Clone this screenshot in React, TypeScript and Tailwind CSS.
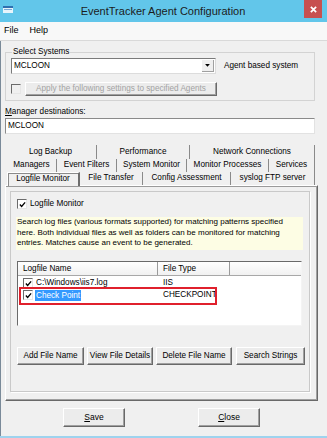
import React from "react";

const Tick = () => (
  <svg viewBox="0 0 8 8" className="w-[7px] h-[7px]">
    <path d="M1 4 L3 6.2 L7 1.5" stroke="#000" strokeWidth="1.5" fill="none" />
  </svg>
);

const CheckBox = ({ checked = false, disabled = false }: { checked?: boolean; disabled?: boolean }) => (
  <span
    className={`w-[10px] h-[10px] shrink-0 flex items-center justify-center border border-t-[#6b6b6b] border-l-[#6b6b6b] border-r-[#e6e6e6] border-b-[#e6e6e6] ${
      disabled ? "bg-[#f0f0f0]" : "bg-white"
    }`}
  >
    {checked && <Tick />}
  </span>
);

const Btn = ({ children, className = "" }: { children: React.ReactNode; className?: string }) => (
  <div
    className={`flex items-center justify-center bg-[#ececec] border border-t-white border-l-white border-r-[#696969] border-b-[#696969] shadow-[inset_-1px_-1px_0_#a0a0a0] whitespace-nowrap ${className}`}
  >
    {children}
  </div>
);

const Tab = ({ label, w }: { label: string; w: string }) => (
  <div className={`${w} h-full flex items-center justify-center border-r border-[#8a8a8a] whitespace-nowrap`}>
    {label}
  </div>
);

export default function App() {
  return (
    <div className="w-[327px] h-[438px] bg-[#f0f0f0] flex flex-col overflow-hidden font-['Liberation_Sans',Arial,sans-serif] text-[8.2px] text-black border-b-2 border-[#9ed3ee] shadow-[inset_1px_0_0_#7a8a99]">
      {/* title bar */}
      <div className="h-[22px] shrink-0 bg-[#62c6ea] flex items-start">
        <div className="w-[14px] pl-[3px] pt-[6px]">
          <svg viewBox="0 0 10 7" className="w-[10px] h-[7px]">
            <rect x="0" y="0" width="10" height="7" fill="#e8f4fb" />
            <rect x="0" y="0" width="10" height="2" fill="#2f6fb0" />
            <rect x="1" y="3" width="8" height="1" fill="#7aa9d6" />
          </svg>
        </div>
        <div className="flex-1 h-full flex items-center justify-center text-[11px] text-[#1c1c1c] pl-[8px]">
          EventTracker Agent Configuration
        </div>
        <div className="w-[18px] h-[18px] mr-[5px] bg-[#c75050] flex items-center justify-center">
          <svg viewBox="0 0 8 8" className="w-[7px] h-[7px]">
            <path d="M1 1 L7 7 M7 1 L1 7" stroke="#fff" strokeWidth="2" />
          </svg>
        </div>
      </div>

      {/* menu */}
      <div className="h-[19px] shrink-0 bg-[#f8f8f8] border-b border-[#d9d9d9] flex items-center gap-[11px] pl-[4px] text-[9px]">
        <span>File</span>
        <span>Help</span>
      </div>

      <div className="flex flex-col px-[5px]">
        {/* select systems */}
        <fieldset className="mt-[6px] w-[310px] border border-[#d3d3d3] px-[5px] pb-[4px]">
          <legend className="ml-[1px] px-[1px] leading-[10px]">Select Systems</legend>
          <div className="mt-[1px] flex items-center">
            <div className="w-[205px] h-[16px] bg-white border border-t-[#7a7a7a] border-l-[#7a7a7a] border-r-[#dcdcdc] border-b-[#dcdcdc] flex items-center">
              <span className="flex-1 pl-[2px]">MCLOON</span>
              <div className="w-[12px] h-[12px] mr-[1px] bg-[#efefef] flex items-center justify-center border-r border-b border-[#a0a0a0]">
                <svg viewBox="0 0 6 5" className="w-[5px] h-[4px]">
                  <path d="M0 0 H6 L3 3.5 Z" fill="#000" />
                </svg>
              </div>
            </div>
            <span className="ml-[8px]">Agent based system</span>
          </div>
          <div className="mt-[8px] flex items-center">
            <CheckBox disabled />
            <Btn className="ml-[4px] w-[192px] h-[14px] text-[#a3a3a3]">Apply the following settings to specified Agents</Btn>
          </div>
        </fieldset>

        {/* manager destinations */}
        <div className="mt-[6px] leading-[10px]">
          <span className="underline">M</span>anager destinations:
        </div>
        <div className="mt-[1px] w-[310px] h-[16px] bg-white border border-t-[#8a8a8a] border-l-[#8a8a8a] border-r-[#e2e2e2] border-b-[#e2e2e2] flex items-center pl-[2px]">
          MCLOON
        </div>

        {/* tabs */}
        <div className="mt-[11px] h-[14px] flex">
          <Tab label="Log Backup" w="w-[92px]" />
          <Tab label="Performance" w="w-[93px]" />
          <Tab label="Network Connections" w="w-[125px]" />
        </div>
        <div className="h-[13px] flex pl-[2px]">
          <Tab label="Managers" w="w-[50px]" />
          <Tab label="Event Filters" w="w-[60px]" />
          <Tab label="System Monitor" w="w-[70px]" />
          <Tab label="Monitor Processes" w="w-[82px]" />
          <Tab label="Services" w="w-[46px]" />
        </div>
        <div className="h-[13px] flex items-end pl-[2px]">
          <div className="w-[73px] h-[14px] flex items-center justify-center bg-[#f0f0f0] border-t border-l border-white border-r-2 border-r-[#6d6d6d] shadow-[inset_0_1px_0_#8a8a8a,inset_1px_0_0_#8a8a8a] relative z-10 -mb-[1px]">
            Logfile Monitor
          </div>
          <Tab label="File Transfer" w="w-[63px]" />
          <Tab label="Config Assessment" w="w-[88px]" />
          <Tab label="syslog FTP server" w="w-[84px]" />
        </div>

        {/* tab panel */}
        <div className="w-[313px] h-[216px] border border-t-white border-l-white border-r-[#696969] border-b-[#696969] shadow-[inset_-1px_-1px_0_#a0a0a0,inset_0_1px_0_#9a9a9a] flex flex-col">
          <div className="ml-[4px] mt-[5px] w-[300px] h-[201px] border border-[#c9c9c9] shadow-[1px_1px_0_#fff] flex flex-col">
            <div className="mt-[6px] ml-[6px] flex items-center gap-[3px]">
              <CheckBox checked />
              <span>Logfile Monitor</span>
            </div>
            <div className="mt-[7px] ml-[5px] w-[287px] h-[33px] bg-[#fdfde4] text-[8px] leading-[10.5px] pl-[1px] pt-[0px] whitespace-nowrap">
              <div>Search log files (various formats supported) for matching patterns specified</div>
              <div>here. Both individual files as well as folders can be monitored for matching</div>
              <div>entries. Matches cause an event to be generated.</div>
            </div>

            {/* list */}
            <div className="relative mt-[11px] ml-[6px] w-[285px] h-[65px] bg-white border border-t-[#6a6a6a] border-l-[#6a6a6a] border-r-[#f4f4f4] border-b-[#f4f4f4]">
              <div className="h-[14px] flex bg-gradient-to-b from-white to-[#f1f1f1] border-b border-[#a8a8a8]">
                <div className="w-[140px] border-r border-[#9a9a9a] flex items-center pl-[5px]">Logfile Name</div>
                <div className="w-[72px] border-r border-[#9a9a9a] flex items-center pl-[5px]">File Type</div>
                <div className="flex-1" />
              </div>
              <div className="mt-[1px] h-[12px] flex items-center">
                <div className="w-[140px] flex items-center pl-[5px] gap-[3px]">
                  <CheckBox checked />
                  <span>C:\Windows\iis7.log</span>
                </div>
                <div className="pl-[5px]">IIS</div>
              </div>
              <div className="h-[12px] flex items-center">
                <div className="w-[140px] flex items-center pl-[5px] gap-[2px]">
                  <CheckBox checked />
                  <span className="bg-[#3399ff] text-white px-[1px] leading-[11px]">Check Point</span>
                </div>
                <div className="pl-[5px]">CHECKPOINT</div>
              </div>
              <div className="absolute left-[1px] top-[25px] w-[198px] h-[18px] border-2 border-[#e0202c]" />
            </div>

            {/* buttons */}
            <div className="mt-[21px] ml-[6px] flex">
              <Btn className="w-[67px] h-[18px]">Add File Name</Btn>
              <Btn className="ml-[3px] w-[66px] h-[18px]">View File Details</Btn>
              <Btn className="ml-[3px] w-[76px] h-[18px]">Delete File Name</Btn>
              <Btn className="ml-[4px] w-[69px] h-[18px]">Search Strings</Btn>
            </div>
          </div>
        </div>

        {/* footer */}
        <div className="mt-[7px] flex text-[8.5px]">
          <Btn className="ml-[58px] w-[62px] h-[19px]">
            <span className="underline">S</span>ave
          </Btn>
          <Btn className="ml-[73px] w-[62px] h-[19px]">
            <span className="underline">C</span>lose
          </Btn>
        </div>
      </div>
    </div>
  );
}
